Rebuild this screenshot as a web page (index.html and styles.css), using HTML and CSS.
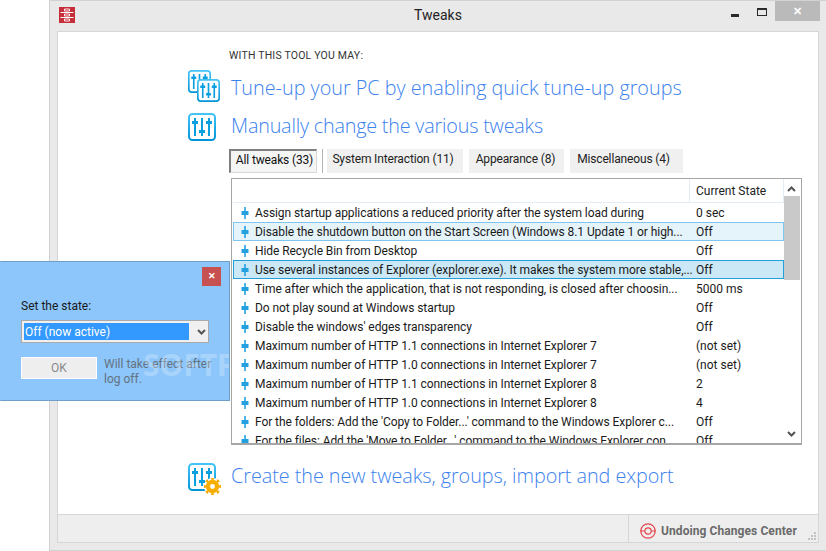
FILE: index.html
```html
<!DOCTYPE html>
<html lang="en">
<head>
<meta charset="utf-8">
<title>Tweaks</title>
<link rel="stylesheet" href="styles.css">
</head>
<body>
<svg class="defs" width="0" height="0" aria-hidden="true">
  <defs>
    <linearGradient id="tile" x1="0" y1="0" x2="0" y2="1">
      <stop offset="0" stop-color="#45c4f8"/>
      <stop offset="1" stop-color="#0095d6"/>
    </linearGradient>
    <symbol id="sliders" viewBox="0 0 28 28">
      <rect x="1" y="1" width="26" height="26" rx="3.5" fill="#fff" stroke="url(#tile)" stroke-width="2"/>
      <path d="M7 5v18M14 5v18M21 5v18" stroke="#0aa0e0" stroke-width="2" fill="none"/>
      <path d="M4 8h6v3H4zM11 17h6v3h-6zM18 8h6v3h-6z" fill="#0aa0e0"/>
    </symbol>
    <symbol id="pin" viewBox="0 0 8 14">
      <path d="M3.200 1h1.600v12H3.200z" fill="#22a0e0"/>
      <path d="M.5 5h7v4h-7z" fill="#22a0e0"/>
    </symbol>
  </defs>
</svg>

<div class="window">
  <header class="titlebar">
    <svg class="app-icon" viewBox="0 0 16 16">
      <rect width="16" height="16" fill="#c62f3a"/>
      <path d="M1.500 5.500h13M1.500 10.500h13" stroke="#fff" stroke-width="1"/>
      <path d="M5.500 2h5v2h-5zM5.500 7h5v2h-5zM5.500 12h5v2h-5z" fill="none" stroke="#fff" stroke-width=".9"/>
    </svg>
    <span class="title">Tweaks</span>
    <div class="controls">
      <span class="min"></span>
      <span class="max"></span>
      <span class="close">✕</span>
    </div>
  </header>

  <div class="client">
    <main class="content">
      <p class="intro">WITH THIS TOOL YOU MAY:</p>

      <div class="action first">
        <div class="icon-slot">
          <svg class="ic-back"><use href="#sliders"/></svg>
          <svg class="ic-front"><use href="#sliders"/></svg>
        </div>
        <h2>Tune-up your PC by enabling quick tune-up groups</h2>
      </div>

      <div class="action second">
        <div class="icon-slot">
          <svg class="ic-main"><use href="#sliders"/></svg>
        </div>
        <h2>Manually change the various tweaks</h2>
      </div>

      <nav class="tabs">
        <span class="tab active">All tweaks (33)</span>
        <span class="tab-sep"></span>
        <span class="tab t2">System Interaction (11)</span>
        <span class="tab t3">Appearance (8)</span>
        <span class="tab t4">Miscellaneous (4)</span>
      </nav>

      <section class="list">
        <div class="table">
          <div class="thead"><span class="th-name"></span><span class="th-state">Current State</span></div>
          <div class="row"><svg class="pin"><use href="#pin"/></svg><span class="name">Assign startup applications a reduced priority after the system load during</span><span class="state">0 sec</span></div>
          <div class="row hover"><svg class="pin"><use href="#pin"/></svg><span class="name">Disable the shutdown button on the Start Screen (Windows 8.1 Update 1 or high...</span><span class="state">Off</span></div>
          <div class="row"><svg class="pin"><use href="#pin"/></svg><span class="name">Hide Recycle Bin from Desktop</span><span class="state">Off</span></div>
          <div class="row selected"><svg class="pin"><use href="#pin"/></svg><span class="name">Use several instances of Explorer (explorer.exe). It makes the system more stable,...</span><span class="state">Off</span></div>
          <div class="row"><svg class="pin"><use href="#pin"/></svg><span class="name">Time after which the application, that is not responding, is closed after choosin...</span><span class="state">5000 ms</span></div>
          <div class="row"><svg class="pin"><use href="#pin"/></svg><span class="name">Do not play sound at Windows startup</span><span class="state">Off</span></div>
          <div class="row"><svg class="pin"><use href="#pin"/></svg><span class="name">Disable the windows' edges transparency</span><span class="state">Off</span></div>
          <div class="row"><svg class="pin"><use href="#pin"/></svg><span class="name">Maximum number of HTTP 1.1 connections in Internet Explorer 7</span><span class="state">(not set)</span></div>
          <div class="row"><svg class="pin"><use href="#pin"/></svg><span class="name">Maximum number of HTTP 1.0 connections in Internet Explorer 7</span><span class="state">(not set)</span></div>
          <div class="row"><svg class="pin"><use href="#pin"/></svg><span class="name">Maximum number of HTTP 1.1 connections in Internet Explorer 8</span><span class="state">2</span></div>
          <div class="row"><svg class="pin"><use href="#pin"/></svg><span class="name">Maximum number of HTTP 1.0 connections in Internet Explorer 8</span><span class="state">4</span></div>
          <div class="row"><svg class="pin"><use href="#pin"/></svg><span class="name">For the folders: Add the 'Copy to Folder...' command to the Windows Explorer c...</span><span class="state">Off</span></div>
          <div class="row"><svg class="pin"><use href="#pin"/></svg><span class="name">For the files: Add the 'Move to Folder...' command to the Windows Explorer con...</span><span class="state">Off</span></div>
        </div>
        <div class="scrollbar">
          <svg class="chev" viewBox="0 0 9 6"><path d="M1 5l3.5-3.5L8 5" fill="none" stroke="#555" stroke-width="2"/></svg>
          <div class="thumb"></div>
          <svg class="chev down" viewBox="0 0 9 6"><path d="M1 1l3.5 3.5L8 1" fill="none" stroke="#555" stroke-width="2"/></svg>
        </div>
      </section>

      <div class="action third">
        <div class="icon-slot">
          <svg class="ic-main"><use href="#sliders"/></svg>
          <svg class="gear" viewBox="0 0 16 16">
            <circle cx="8" cy="8" r="8" fill="#fff"/>
            <path d="M8 2.500l-1-2.300h2zM8 13.500l1 2.300H7zM2.500 8L.2 9V7zM13.500 8l2.300-1v2zM4.100 4.100L1.800 3.200l1.400-1.400zM11.900 11.900l2.300.9-1.400 1.400zM4.100 11.900l-.9 2.300-1.400-1.400zM11.900 4.100l.9-2.300 1.400 1.400z" fill="#f5a800" stroke="#f5a800"/>
            <circle cx="8" cy="8" r="4.300" fill="none" stroke="#f7ae00" stroke-width="4"/>
            <circle cx="8" cy="8" r="1.300" fill="#fff"/>
          </svg>
        </div>
        <h2>Create the new tweaks, groups, import and export</h2>
      </div>
    </main>

    <footer class="statusbar">
      <div class="undo">
        <svg class="undo-icon" viewBox="0 0 16 16">
          <circle cx="8" cy="8" r="7.200" fill="none" stroke="#e8404a" stroke-width="1.200"/>
          <circle cx="8" cy="8" r="3.200" fill="none" stroke="#e8404a" stroke-width="1.200"/>
          <path d="M.5 8h4M11.500 8h4" stroke="#e8404a" stroke-width="1.200"/>
        </svg>
        <span>Undoing Changes Center</span>
      </div>
      <svg class="grip" viewBox="0 0 8 8"><path d="M6 0h2v2H6zM3 3h2v2H3zM6 3h2v2H6zM0 6h2v2H0zM3 6h2v2H3zM6 6h2v2H6z" fill="#c2c2c2"/></svg>
    </footer>
  </div>
</div>

<aside class="dialog">
  <span class="dlg-close">✕</span>
  <label class="dlg-label">Set the state:</label>
  <div class="select">
    <span class="select-value">Off (now active)</span>
    <svg class="select-arrow" viewBox="0 0 9 6"><path d="M1 1l3.500 3.500L8 1" fill="none" stroke="#555" stroke-width="2"/></svg>
  </div>
  <div class="dlg-actions">
    <span class="ok">OK</span>
    <span class="note">Will take effect after log off.</span>
  </div>
  <span class="watermark">SOFTP</span>
</aside>
</body>
</html>
```

FILE: styles.css
```css
* { box-sizing: border-box; }
html, body { margin: 0; padding: 0; }
body {
  position: relative;
  width: 826px;
  height: 551px;
  overflow: hidden;
  background: #fff;
  font-family: Roboto, "Noto Sans", sans-serif;
  font-size: 12px;
  color: #1a1a1a;
}
.defs { position: absolute; }

.window {
  margin-left: 49px;
  height: 551px;
  display: flex;
  flex-direction: column;
  background: #e9e9e9;
  border: 1px solid #d2d2d2;
  border-right: 0;
  padding: 0 7px 7px 7px;
}

.titlebar {
  height: 30px;
  flex: none;
  position: relative;
  display: flex;
  align-items: center;
  justify-content: center;
}
.app-icon {
  position: absolute;
  left: 2px;
  top: 6px;
  width: 16px;
  height: 16px;
}
.title { font-size: 14px; color: #222; margin-bottom: 2px; }
.controls {
  position: absolute;
  top: 0;
  right: -1px;
  display: flex;
  height: 21px;
}
.min {
  width: 8px;
  height: 2.500px;
  background: #2a2a2a;
  margin: 13px 18px 0 0;
}
.max {
  width: 10px;
  height: 8px;
  border: 1px solid #2a2a2a;
  border-top-width: 2px;
  margin: 7px 8px 0 0;
}
.close {
  width: 45px;
  height: 20px;
  background: #bababa;
  color: #fff;
  font-size: 11px;
  font-weight: 700;
  text-align: center;
  line-height: 21px;
}

.client {
  flex: 1;
  display: flex;
  flex-direction: column;
  background: #fff;
  border: 1px solid #d6d6d6;
  min-height: 0;
}
.content {
  flex: 1;
  padding-left: 130px;
  display: flex;
  flex-direction: column;
}
.intro {
  margin: 17px 0 0 41px;
  height: 14px;
  line-height: 14px;
  font-size: 10.500px;
  font-weight: 400;
  letter-spacing: .2px;
  color: #333;
}
.action {
  display: flex;
  align-items: center;
  height: 32px;
}
.action.first { margin-top: 10px; }
.action.second { margin-top: 6px; }
.action.second h2 { letter-spacing: -.2px; }
.action.third { margin-top: 16px; }
.action.third h2 { letter-spacing: -.04px; }
.icon-slot {
  position: relative;
  width: 43px;
  height: 32px;
  flex: none;
}
.icon-slot svg { position: absolute; }
.ic-main { left: 0; top: 2px; width: 28px; height: 28px; }
.ic-back { left: 0; top: -3px; width: 23px; height: 23px; }
.ic-front { left: 9px; top: 6px; width: 23px; height: 23px; }
.gear { left: 16px; top: 17px; width: 17px; height: 17px; }
h2 {
  margin: 0 0 3px;
  font-family: "Open Sans", "Noto Sans", sans-serif;
  font-weight: 300;
  font-size: 19.800px;
  line-height: 30px;
  color: #3c82ee;
  white-space: nowrap;
}

.tabs {
  display: flex;
  margin: 6px 0 0 41px;
  height: 25px;
  letter-spacing: -.15px;
}
.tab {
  height: 24px;
  line-height: 21px;
  background: #f0f0f0;
  color: #222;
  text-align: center;
  white-space: nowrap;
}
.tab.active {
  width: 88px;
  background: #f5f5f5;
  border: 1px solid #808080;
  border-right-color: #d8d8d8;
  border-bottom-color: #d8d8d8;
  border-top-width: 2px;
  border-left-width: 2px;
  color: #111;
  line-height: 19px;
  padding-left: 2px;
}
.tab-sep {
  width: 1px;
  height: 24px;
  background: #b4b4b4;
  margin: 0 4px 0 5px;
}
.t2 { width: 136px; margin-right: 6px; padding-right: 4px; }
.t3 { width: 95px; margin-right: 6px; padding-right: 2px; }
.t4 { width: 113px; padding-right: 6px; }

.list {
  margin: 4px 0 0 43px;
  width: 571px;
  height: 267px;
  border: 1px solid #a6a6a6;
  border-bottom-width: 2px;
  display: flex;
  overflow: hidden;
  flex: none;
}
.table { width: 552px; flex: none; padding-left: 1px; overflow: hidden; }
.thead {
  display: flex;
  height: 24px;
  border-bottom: 1px solid #e4edf6;
  align-items: center;
}
.th-name {
  width: 457px;
  height: 100%;
  border-right: 1px solid #e4edf6;
}
.th-state {
  flex: 1;
  height: 100%;
  line-height: 24px;
  padding-left: 6px;
  border-right: 1px solid #e4edf6;
  color: #222;
}
.row {
  display: flex;
  align-items: center;
  height: 19px;
  border: 1px solid transparent;
  white-space: nowrap;
}
.row.hover { background: #e5f3fb; border-color: #7fc5ef; }
.row.selected { background: #cbe8f6; border-color: #26a0da; }
.pin { width: 8px; height: 14px; margin-left: 7px; flex: none; }
.name { width: 441px; margin-left: 6px; flex: none; overflow: hidden; letter-spacing: -.07px; }
.state { margin-left: 0; }

.scrollbar {
  width: 18px;
  display: flex;
  flex-direction: column;
  align-items: center;
  background: #fff;
  position: relative;
}
.chev { width: 9px; height: 6px; position: absolute; top: 7px; left: 3px; }
.chev.down { top: auto; bottom: 6px; }
.thumb {
  position: absolute;
  top: 17px;
  left: 0;
  width: 16px;
  height: 84px;
  background: #c9c9c9;
}

.statusbar {
  height: 28px;
  flex: none;
  background: #eee;
  border-top: 1px solid #d6d6d6;
  display: flex;
  justify-content: flex-end;
  position: relative;
}
.undo {
  width: 190px;
  border-left: 1px solid #d6d6d6;
  display: flex;
  align-items: center;
  padding-left: 11px;
  padding-top: 4px;
  font-weight: 700;
  color: #6a6a6a;
  font-size: 12px;
  letter-spacing: .08px;
  white-space: nowrap;
}
.undo-icon { width: 16px; height: 16px; margin-right: 5px; flex: none; }
.grip {
  position: absolute;
  right: 2px;
  bottom: 2px;
  width: 8px;
  height: 8px;
}

.dialog {
  position: absolute;
  left: 0;
  top: 261px;
  width: 230px;
  height: 140px;
  background: #8cc6fa;
  border: 1px solid #6f9fc9;
  border-left-color: #8cc6fa;
  padding: 36px 8px 0 20px;
  overflow: hidden;
}
.dlg-close {
  position: absolute;
  top: 5px;
  right: 8px;
  width: 19px;
  height: 19px;
  background: #c75050;
  color: #fff;
  font-size: 9px;
  font-weight: 700;
  text-align: center;
  line-height: 19px;
}
.dlg-label { display: block; height: 16px; line-height: 16px; color: #1a1a1a; }
.select {
  margin-top: 6px;
  width: 188px;
  height: 23px;
  background: #f0f0f0;
  border: 1px solid #a9a9a9;
  padding: 2px;
  display: flex;
  align-items: center;
}
.select-value {
  width: 165px;
  height: 17px;
  line-height: 18px;
  background: #3399ff;
  color: #fff;
  padding-left: 1px;
  font-size: 12px;
}
.select-arrow { width: 9px; height: 6px; margin-left: 8px; }
.dlg-actions {
  display: flex;
  margin-top: 14px;
}
.ok {
  width: 76px;
  height: 22px;
  background: #eee;
  border: 1px solid #fff;
  text-align: center;
  line-height: 20px;
  color: #8a8a8a;
  flex: none;
}
.note {
  margin-left: 7px;
  width: 118px;
  line-height: 15px;
  color: #64727f;
}
.watermark {
  position: absolute;
  left: 142px;
  top: 82px;
  font-family: "Noto Sans", sans-serif;
  font-size: 30px;
  font-weight: 700;
  color: rgba(255, 255, 255, .25);
  white-space: nowrap;
}
```
